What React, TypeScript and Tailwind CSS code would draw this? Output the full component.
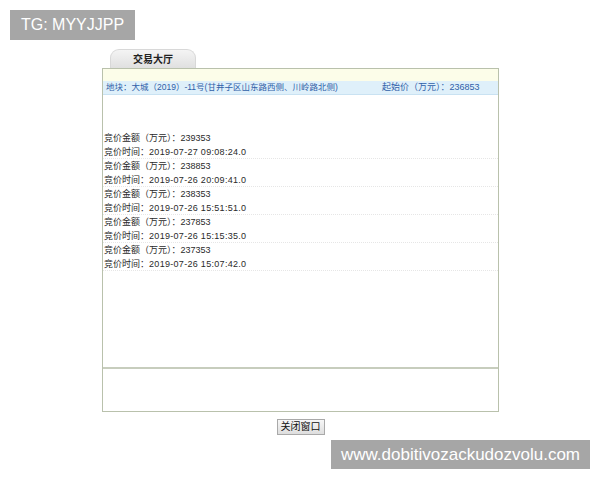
import React from 'react';

const bids = [
  { amount: '239353', time: '2019-07-27 09:08:24.0' },
  { amount: '238853', time: '2019-07-26 20:09:41.0' },
  { amount: '238353', time: '2019-07-26 15:51:51.0' },
  { amount: '237853', time: '2019-07-26 15:15:35.0' },
  { amount: '237353', time: '2019-07-26 15:07:42.0' },
];

const font = { fontFamily: '"Liberation Sans", "Noto Sans CJK SC", sans-serif' };

const App: React.FC = () => {
  return (
    <div className="relative w-[600px] h-[480px] bg-white overflow-hidden" style={font}>
      {/* watermark top-left */}
      <div className="absolute left-[10px] top-[10px] w-[125px] h-[30px] bg-[#a6a6a6] flex items-center justify-center text-white text-[16px] z-10">
        TG: MYYJJPP
      </div>

      <div className="pt-[49px] pl-[102px] w-[499px]">
        {/* tab */}
        <div className="ml-[8px] w-[86px] h-[19px] rounded-t-[9px] bg-gradient-to-b from-[#f4f4f4] to-[#e0e0e0] border border-b-0 border-[#d8d8d8] flex items-center justify-center text-[10px] font-bold text-[#222]">
          交易大厅
        </div>

        {/* panel */}
        <div className="w-[397px] h-[344px] border border-[#b9c1ac] flex flex-col">
          <div className="h-[12px] bg-[#fcfde9]" />
          <div className="h-[14px] bg-[#dff0fa] border-b border-[#c9e2f2] flex items-center text-[#2f5fa8] pl-[3px]">
            <span className="w-[276px] text-[8.5px]">地块：大城（2019）-11号(甘井子区山东路西侧、川岭路北侧)</span>
            <span className="text-[9px]">起始价（万元）：236853</span>
          </div>

          <div className="flex-1 pt-[36px] text-[9px] text-[#2a2a2a]">
            {bids.map((b) => (
              <div key={b.amount}>
                <div className="h-[14px] leading-[14px] pl-[1px]">竞价金额（万元）：{b.amount}</div>
                <div className="h-[14px] leading-[14px] pl-[1px] border-b border-dotted border-[#e6e6e6]">
                  竞价时间：<span className="tracking-[0.3px]">{b.time}</span>
                </div>
              </div>
            ))}
          </div>

          <div className="h-[44px] border-t-2 border-[#c7cdbd]" />
        </div>

        {/* button */}
        <div className="w-[397px] flex justify-center pt-[7px]">
          <button className="w-[48px] h-[16px] border border-[#a9a9a9] bg-gradient-to-b from-[#f7f7f7] to-[#dedede] text-[10px] text-[#111] leading-none flex items-center justify-center">
            关闭窗口
          </button>
        </div>
      </div>

      {/* watermark bottom-right */}
      <div className="absolute left-[331px] top-[440px] w-[259px] h-[29px] bg-[#a6a6a6] flex items-center justify-center text-white text-[17px]">
        www.dobitivozackudozvolu.com
      </div>
    </div>
  );
};

export default App;
